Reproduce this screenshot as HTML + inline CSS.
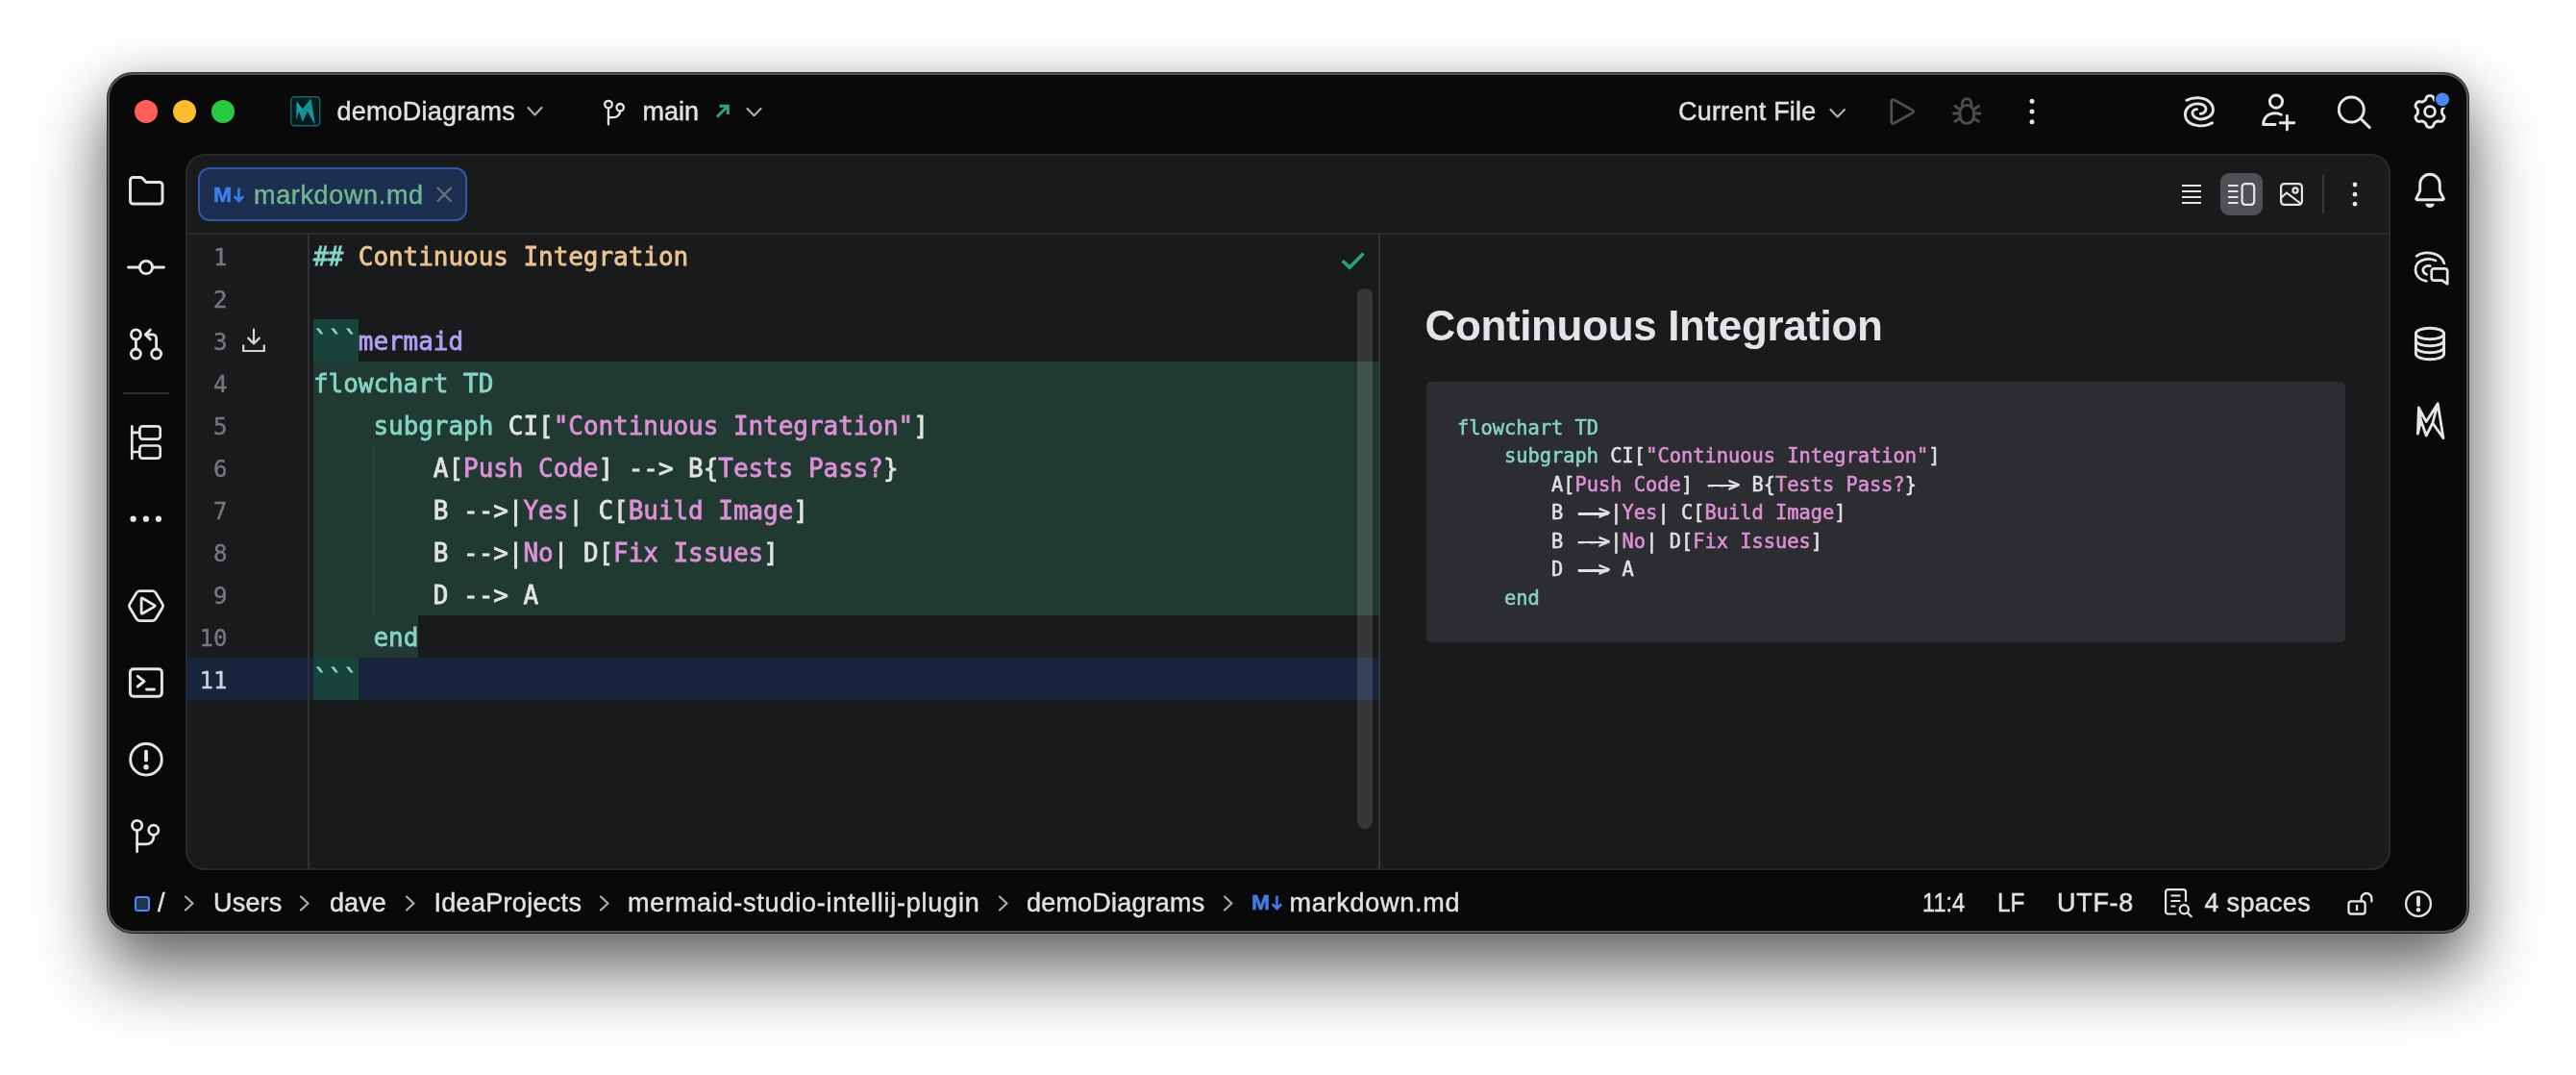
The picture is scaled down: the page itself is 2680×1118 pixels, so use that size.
<!DOCTYPE html>
<html lang="en">
<head>
<meta charset="utf-8">
<title>markdown.md – demoDiagrams</title>
<style>
*{box-sizing:border-box;margin:0;padding:0}
html,body{width:2680px;height:1118px;background:#fff;overflow:hidden}
body{position:relative;will-change:transform;-webkit-font-smoothing:antialiased;font-family:"Liberation Sans",sans-serif;color:#dfe1e5}
.abs{position:absolute}
svg{position:absolute;overflow:visible}
.ic{fill:none;stroke:#e4e5e8;stroke-width:2.9;stroke-linecap:round;stroke-linejoin:round}
.icf{fill:#e4e5e8;stroke:none}
#win{position:absolute;left:112px;top:76px;width:2456px;height:894px;background:#090909;border-radius:26px;
 box-shadow:0 0 0 1px rgba(0,0,0,.8),0 38px 72px 5px rgba(0,0,0,.54),0 6px 44px rgba(0,0,0,.16)}
#win:after{content:"";position:absolute;inset:0;border-radius:26px;border:2px solid rgba(255,255,255,.3);pointer-events:none}
.tl{position:absolute;top:104px;width:24px;height:24px;border-radius:50%}
.ui{position:absolute;font-size:27px;line-height:32px;white-space:pre;color:#dfe1e5}
.st{top:923px}
.chev{fill:none;stroke:#a9acb3;stroke-width:2.2;stroke-linecap:round;stroke-linejoin:round}
#panel{position:absolute;left:193px;top:160px;width:2294px;height:745px;background:#191a1c;border-radius:20px;overflow:hidden}
#panel:after{content:"";position:absolute;inset:0;border-radius:20px;border:2px solid #27282b;pointer-events:none}
.mono{font-family:"DejaVu Sans Mono","Liberation Mono",monospace}
.ln{position:absolute;left:0;width:43.5px;text-align:right;font-size:24px;line-height:44px;height:44px;padding-top:2px;color:#74777d}
.cl{position:absolute;left:133px;font-size:26px;line-height:44px;height:44px;padding-top:1px;white-space:pre;letter-spacing:-.05px;color:#dfe1e5}
.k{color:#84d4c4}.s{color:#dd8fd8}.h{color:#ebc48e}.p{color:#b3a0f5}.w{color:#e1e3e0}
.bg{position:absolute}
.ar{position:relative}
.ar:before{content:"";position:absolute;left:3.2px;right:2.4px;top:11.9px;height:2.5px;background:currentColor}
.mono{-webkit-text-stroke:.8px currentColor}
#pv pre{-webkit-text-stroke:.55px currentColor}
.ln{-webkit-text-stroke:.4px currentColor}
.ui{-webkit-text-stroke:.45px currentColor}
#pv{position:absolute;left:1291px;top:237px;width:956px;height:271px;background:#2b2d30;border-radius:5px}
#pv pre{position:absolute;left:32px;top:33.5px;font-size:20.4px;line-height:29.58px;letter-spacing:-.02px;color:#dfe1e5}
</style>
</head>
<body>
<div id="win"></div>

<!-- traffic lights -->
<div class="tl" style="left:140px;background:#ff5f57"></div>
<div class="tl" style="left:180px;background:#febc2e"></div>
<div class="tl" style="left:220px;background:#28c840"></div>

<!--TITLEBAR-->
<!-- project icon -->
<svg style="left:302px;top:100px" width="32" height="32" viewBox="0 0 32 32">
 <defs><linearGradient id="mg" x1="0" y1="0" x2="1" y2="1"><stop offset="0" stop-color="#19b4c0"/><stop offset=".5" stop-color="#0f8f8c"/><stop offset="1" stop-color="#16a6bd"/></linearGradient></defs>
 <rect x=".75" y=".75" width="30" height="30" rx="3.5" fill="#041b1e" stroke="#1c6468" stroke-width="1.4"/>
 <polygon points="6,25.5 6.8,5.4 12.8,13.3 21.6,2.4 25.8,29.5 17.9,16 12.8,26.8 9,16" fill="url(#mg)"/>
</svg>
<span class="ui" id="t_proj" style="left:350.5px;top:100px;letter-spacing:.2px">demoDiagrams</span>
<svg style="left:548px;top:110px" width="18" height="12"><path class="chev" d="M1.5 2 L8.5 9.5 L15.5 2"/></svg>
<!-- branch -->
<svg style="left:624px;top:100px" width="32" height="32" viewBox="0 0 32 32"><g class="ic" style="stroke-width:2.3">
 <circle cx="9" cy="8.6" r="3.8"/><circle cx="21.2" cy="11.7" r="3.7"/><path d="M9 12.6V29.4"/><path d="M9 22.2h5.2a7 7 0 0 0 7-6.8"/></g></svg>
<span class="ui" id="t_main" style="left:668.5px;top:100px;letter-spacing:0px">main</span>
<svg style="left:743.2px;top:107.2px" width="18" height="18"><path d="M3 14.5 L13.5 4 M5.5 3.2 H14.3 V12" fill="none" stroke="#2fa678" stroke-width="3" stroke-linecap="butt" stroke-linejoin="miter"/></svg>
<svg style="left:775.6px;top:110.6px" width="18" height="12"><path class="chev" d="M1.5 2 L8.5 9.2 L15.5 2"/></svg>

<span class="ui" id="t_cf" style="left:1746px;top:100px;letter-spacing:.2px">Current File</span>
<svg style="left:1903px;top:112px" width="18" height="12"><path class="chev" d="M1.5 2 L8.7 9.5 L16 2"/></svg>
<!-- run -->
<svg style="left:1959px;top:96px" width="40" height="40" viewBox="0 0 40 40"><path d="M8.8 9.8 Q8.8 6.6 11.8 8.1 L30.2 18.3 Q33 20 30.2 21.7 L11.8 31.9 Q8.8 33.4 8.8 30.2 Z" fill="none" stroke="#4c4d50" stroke-width="2.9" stroke-linejoin="round"/></svg>
<!-- debug -->
<svg style="left:2026px;top:96px" width="40" height="40" viewBox="0 0 40 40"><g fill="none" stroke="#4c4d50" stroke-width="2.9" stroke-linecap="round" stroke-linejoin="round">
 <path d="M13 20.6 a7.25 7.25 0 0 1 14.5 0 v4.5 a7.25 7.25 0 0 1 -14.5 0 Z"/>
 <path d="M15.6 14.6 V11.3 a4.6 4.6 0 0 1 9.2 0 V14.6"/>
 <path d="M13.2 18 L8 14.3 M27.3 18 L32.5 14.3 M13 22 H6.6 M27.5 22 H33.9 M13.4 27 L8 30.2 M27.1 27 L32.5 30.2"/></g></svg>
<!-- kebab -->
<svg style="left:2104px;top:96px" width="20" height="40"><g class="icf"><circle cx="10" cy="9.3" r="2.5"/><circle cx="10" cy="20.1" r="2.5"/><circle cx="10" cy="30.8" r="2.5"/></g></svg>
<!-- AI spiral -->
<svg style="left:2268px;top:96px" width="40" height="40" viewBox="0 0 40 40"><g class="ic">
 <path d="M6.9 8.2 C14 4.6 24.5 4.8 30.2 9.6 C36 14.6 35.8 22 30 25.6 C24 29.4 16 28.4 13.5 23.6 C12 20.2 14.2 17.4 17.6 17.6"/>
 <path d="M21.4 22.3 C24.6 22.5 27.6 19.6 26.8 16.2 C25.5 11.4 15 10 9 15.2 C3.6 20 4.6 28 10.2 32 C17 36.4 28 35.4 33.6 31.8"/></g></svg>
<!-- add user -->
<svg style="left:2348px;top:94px" width="44" height="44" viewBox="0 0 44 44"><g class="ic">
 <circle cx="20" cy="11.6" r="6.6"/><path d="M19 35.5 H6.6 C6.6 29 11 23.7 19 23.7 C21.4 23.7 23.6 24.2 25.3 25.2"/><path d="M31.4 26.5 V41 M24.2 33.7 H38.8"/></g></svg>
<!-- search -->
<svg style="left:2426px;top:94px" width="44" height="44" viewBox="0 0 44 44"><g class="ic"><circle cx="20.3" cy="20" r="13"/><path d="M29.8 29.3 L39.3 38.6"/></g></svg>
<!-- gear -->
<svg style="left:2508px;top:96px" width="40" height="40" viewBox="0 0 40 40"><g class="ic">
 <circle cx="20" cy="20" r="5.4"/>
 <path d="M32.5,20.0 L32.6,19.3 L32.6,18.7 L32.7,18.0 L33.2,17.2 L34.0,16.2 L34.8,15.2 L35.0,14.2 L34.9,13.4 L34.6,12.5 L34.2,11.8 L33.8,11.1 L33.2,10.4 L32.5,9.9 L31.5,9.6 L30.3,9.7 L29.0,10.0 L28.1,10.0 L27.4,9.8 L26.8,9.5 L26.3,9.1 L25.7,8.8 L25.1,8.4 L24.6,8.0 L24.2,7.2 L23.8,6.0 L23.2,4.8 L22.5,4.1 L21.7,3.7 L20.9,3.6 L20.0,3.6 L19.1,3.6 L18.3,3.7 L17.5,4.1 L16.8,4.8 L16.2,6.0 L15.8,7.2 L15.4,8.0 L14.9,8.4 L14.3,8.8 L13.7,9.1 L13.2,9.5 L12.6,9.8 L11.9,10.0 L11.0,10.0 L9.7,9.7 L8.5,9.6 L7.5,9.9 L6.8,10.4 L6.2,11.1 L5.8,11.8 L5.4,12.5 L5.1,13.4 L5.0,14.2 L5.2,15.2 L6.0,16.2 L6.8,17.2 L7.3,18.0 L7.4,18.7 L7.4,19.3 L7.4,20.0 L7.4,20.7 L7.4,21.3 L7.3,22.0 L6.8,22.8 L6.0,23.8 L5.2,24.8 L5.0,25.8 L5.1,26.6 L5.4,27.5 L5.8,28.2 L6.2,28.9 L6.8,29.6 L7.5,30.1 L8.5,30.4 L9.7,30.3 L11.0,30.0 L11.9,30.0 L12.6,30.2 L13.2,30.5 L13.7,30.9 L14.3,31.2 L14.9,31.6 L15.4,32.0 L15.8,32.8 L16.2,34.0 L16.8,35.2 L17.5,35.9 L18.3,36.3 L19.1,36.4 L20.0,36.5 L20.9,36.4 L21.7,36.3 L22.5,35.9 L23.2,35.2 L23.8,34.0 L24.2,32.8 L24.6,32.0 L25.1,31.6 L25.7,31.2 L26.3,30.9 L26.8,30.5 L27.4,30.2 L28.1,30.0 L29.0,30.0 L30.3,30.3 L31.5,30.4 L32.5,30.1 L33.2,29.6 L33.8,28.9 L34.2,28.2 L34.6,27.5 L34.9,26.6 L35.0,25.8 L34.8,24.8 L34.0,23.8 L33.2,22.8 L32.7,22.0 L32.6,21.3 L32.6,20.7Z"/></g>
 <circle cx="33" cy="7.4" r="8.6" fill="#090909"/><circle cx="33" cy="7.4" r="7" fill="#4d89f5"/></svg>
<!--/TITLEBAR-->
<!--LEFTBAR-->
<!-- folder -->
<svg style="left:132px;top:178px" width="40" height="40" viewBox="0 0 40 40"><path class="ic" d="M3.5 9.5 a3 3 0 0 1 3-3 h7.7 a3 3 0 0 1 2.2 1 l3.6 4 h14 a3 3 0 0 1 3 3 v16.5 a3 3 0 0 1 -3 3 h-27.5 a3 3 0 0 1 -3-3 Z"/></svg>
<!-- commit -->
<svg style="left:132px;top:258px" width="40" height="40" viewBox="0 0 40 40"><g class="ic"><circle cx="20" cy="20" r="6.6"/><path d="M1.5 20 H13 M27 20 H38.5"/></g></svg>
<!-- pull requests -->
<svg style="left:132px;top:338px" width="40" height="40" viewBox="0 0 40 40"><g class="ic" style="stroke-width:2.8">
 <circle cx="9.4" cy="9.9" r="5"/><circle cx="9.4" cy="30" r="5"/><circle cx="30.6" cy="30" r="5"/>
 <path d="M9.4 15 V25"/><path d="M30.6 25 V13.8 a3.9 3.9 0 0 0 -3.9 -3.9 H19.6"/><path d="M24.4 4.9 L19.4 9.9 L24.4 14.9"/></g></svg>
<div class="abs" style="left:128px;top:408px;width:48px;height:2px;background:#2b2c2f"></div>
<!-- structure -->
<svg style="left:132px;top:440px" width="40" height="40" viewBox="0 0 40 40"><g class="ic" style="stroke-width:2.7">
 <path d="M5.3 3.3 V37 M5.3 9.9 H13 M5.3 30 H13"/><rect x="13.4" y="3.4" width="21.3" height="13.2" rx="2.8"/><rect x="13.4" y="23.5" width="21.3" height="13.2" rx="2.8"/></g></svg>
<!-- more -->
<svg style="left:132px;top:520px" width="40" height="40" viewBox="0 0 40 40"><g class="icf"><circle cx="6.6" cy="19.7" r="3.1"/><circle cx="19.9" cy="19.7" r="3.1"/><circle cx="32.9" cy="19.7" r="3.1"/></g></svg>
<!-- services -->
<svg style="left:132px;top:610px" width="40" height="40" viewBox="0 0 40 40"><g class="ic" style="stroke-width:2.8">
 <path d="M9.91 6.62 Q11.10 4.65 13.40 4.65 L26.60 4.65 Q28.90 4.65 30.09 6.62 L37.01 18.13 Q38.20 20.10 37.01 22.07 L30.09 33.58 Q28.90 35.55 26.60 35.55 L13.40 35.55 Q11.10 35.55 9.91 33.58 L2.99 22.07 Q1.80 20.10 2.99 18.13 Z"/>
 <path d="M15.10 13.00 Q15.10 11.50 16.40 12.25 L28.60 19.35 Q29.90 20.10 28.60 20.85 L16.40 27.95 Q15.10 28.70 15.10 27.20 Z"/></g></svg>
<!-- terminal -->
<svg style="left:132px;top:690px" width="40" height="40" viewBox="0 0 40 40"><g class="ic">
 <rect x="3.4" y="5.8" width="33" height="28.4" rx="3.4"/><path d="M11.2 13.2 L18 18.6 L11.2 24"/><path d="M20.5 27 H28.5"/></g></svg>
<!-- problems -->
<svg style="left:132px;top:770px" width="40" height="40" viewBox="0 0 40 40"><g class="ic"><circle cx="20" cy="19.8" r="16.3"/><path d="M20 11.8 V20.6" style="stroke-width:3.9"/></g><circle class="icf" cx="20" cy="27.8" r="2.7"/></svg>
<!-- git -->
<svg style="left:132px;top:850px" width="40" height="40" viewBox="0 0 40 40"><g class="ic" style="stroke-width:2.7">
 <circle cx="10.6" cy="8.4" r="5.1"/><circle cx="27.8" cy="13.2" r="5.1"/><path d="M10.6 13.6 V35.8"/><path d="M10.6 27.8 H20.6 a7.2 7.2 0 0 0 7.2 -7.2 v-2"/></g></svg>
<!--/LEFTBAR-->
<!--RIGHTBAR-->
<!-- bell -->
<svg style="left:2508px;top:178px" width="40" height="40" viewBox="0 0 40 40"><g class="ic">
 <path d="M9.7 13.6 a10.3 10.3 0 0 1 20.6 0 V20.6 L34.2 28.4 a.9 .9 0 0 1 -.8 1.3 H6.6 a.9 .9 0 0 1 -.8 -1.3 L9.7 20.6 Z"/></g><path class="icf" d="M15.3 33.8 h9.4 a4.7 4.2 0 0 1 -9.4 0 Z"/></svg>
<!-- ai chat -->
<svg style="left:2508px;top:258px" width="44" height="44" viewBox="0 0 44 44"><g class="ic" style="stroke-width:2.7">
 <path d="M6.1 8.3 C14 2.6 31 3.6 34.8 15.8"/><path d="M26 12.9 C15 8.6 4.5 14 5 23 C5.5 30 11 33.5 16.3 34.3"/><path d="M20.3 18.6 C15.5 17.6 12 21 13 24 C13.6 26 15 27 16.5 27.4"/>
 <path d="M24.3 21.4 H35.6 a2.6 2.6 0 0 1 2.6 2.6 V37.3 L32.6 33.7 H24.3 a2.6 2.6 0 0 1 -2.6 -2.6 V24 a2.6 2.6 0 0 1 2.6 -2.6 Z"/></g></svg>
<!-- database -->
<svg style="left:2508px;top:338px" width="40" height="40" viewBox="0 0 40 40"><g class="ic">
 <ellipse cx="20" cy="9" rx="14.6" ry="5.8"/><path d="M5.4 9 V30 c0 3.2 6.5 5.8 14.6 5.8 s14.6 -2.6 14.6 -5.8 V9"/><path d="M5.4 16 c0 3.2 6.5 5.8 14.6 5.8 s14.6 -2.6 14.6 -5.8"/><path d="M5.4 23 c0 3.2 6.5 5.8 14.6 5.8 s14.6 -2.6 14.6 -5.8"/></g></svg>
<!-- mermaid logo -->
<svg style="left:2508px;top:416px" width="40" height="44" viewBox="0 0 40 44"><path class="ic" style="stroke-width:2.8" d="M7.4 35.2 L8.4 8 L16.2 22.6 L28.2 3.8 L34 39.6 L22.8 24 L16.2 37 L10.6 21 Z M22.8 24 L28.2 3.8 M10.6 21 L8.4 8"/></svg>
<!--/RIGHTBAR-->

<div id="panel">
<!--PANEL-->
<!-- tab -->
<div class="abs" style="left:13px;top:14px;width:280px;height:56px;border:2px solid #2d5aa6;background:#1c2f50;border-radius:12px"></div>
<span class="abs" id="t_mdicon" style="left:28.5px;top:31px;font-size:21.5px;line-height:24px;font-weight:700;color:#3b7fec;white-space:pre;-webkit-text-stroke:.5px #3b7fec;transform:scaleX(1.07);transform-origin:0 0">M</span>
<svg style="left:49px;top:34px" width="14" height="18"><path d="M6.5 1.5 V15 M1.8 10.2 L6.5 15.2 L11.2 10.2" fill="none" stroke="#3b7fec" stroke-width="2.6" stroke-linecap="butt" stroke-linejoin="miter"/></svg>
<span class="ui" id="t_tab" style="left:71px;top:27px;color:#70b690;letter-spacing:.65px">markdown.md</span>
<svg style="left:261px;top:34px" width="18" height="18"><path d="M1.5 1.5 L15 15 M15 1.5 L1.5 15" fill="none" stroke="#6b7080" stroke-width="2.2" stroke-linecap="round"/></svg>
<!-- tab bar right icons -->
<svg style="left:2075px;top:30px" width="24" height="24"><path d="M2 3h20M2 9h20M2 15h20M2 21h20" stroke="#e4e5e8" stroke-width="2.2" fill="none"/></svg>
<div class="abs" style="left:2117px;top:20px;width:44px;height:44px;border-radius:9px;background:#4f5053"></div>
<svg style="left:2124px;top:30px" width="30" height="24"><path d="M1 3h10.5M1 9h10.5M1 15h10.5M1 21h10.5" stroke="#e4e5e8" stroke-width="2.2" fill="none"/><rect x="15.6" y="1.2" width="12.6" height="21.6" rx="3.2" fill="none" stroke="#e4e5e8" stroke-width="2.2"/></svg>
<svg style="left:2178px;top:29px" width="26" height="26"><g fill="none" stroke="#e4e5e8" stroke-width="2.2" stroke-linejoin="round"><rect x="2.1" y="2.1" width="21.8" height="21.8" rx="3.4"/><circle cx="17" cy="9" r="2.6"/><path d="M2.3 16.5 L8 11.5 L23 23"/></g></svg>
<div class="abs" style="left:2223px;top:22px;width:2px;height:40px;background:#38393c"></div>
<svg style="left:2250px;top:26px" width="14" height="32"><g class="icf"><circle cx="7" cy="6" r="2.4"/><circle cx="7" cy="16.2" r="2.4"/><circle cx="7" cy="26.2" r="2.4"/></g></svg>
<!-- header separator -->
<div class="abs" style="left:0;top:82px;width:2294px;height:2px;background:#292a2d"></div>

<!-- editor backgrounds -->
<div class="bg" style="left:133px;top:172px;width:47px;height:44px;background:#17433b"></div>
<div class="bg" style="left:133px;top:216px;width:1108px;height:264px;background:#213a31"></div>
<div class="bg" style="left:133px;top:480px;width:109px;height:44px;background:#213a31"></div>
<div class="bg" style="left:0;top:524px;width:1241px;height:44px;background:#17243c"></div>
<div class="bg" style="left:133px;top:524px;width:47px;height:44px;background:#17433b"></div>
<div class="bg" style="left:195px;top:304px;width:1.5px;height:176px;background:rgba(255,255,255,.06)"></div>
<!-- gutter line -->
<div class="abs" style="left:127px;top:84px;width:2px;height:661px;background:#313236"></div>

<!-- line numbers -->
<div class="mono">
<div class="ln" style="top:84px">1</div>
<div class="ln" style="top:128px">2</div>
<div class="ln" style="top:172px">3</div>
<div class="ln" style="top:216px">4</div>
<div class="ln" style="top:260px">5</div>
<div class="ln" style="top:304px">6</div>
<div class="ln" style="top:348px">7</div>
<div class="ln" style="top:392px">8</div>
<div class="ln" style="top:436px">9</div>
<div class="ln" style="top:480px">10</div>
<div class="ln" style="top:524px;color:#d0d3d9">11</div>
</div>
<!-- gutter download icon -->
<svg style="left:58px;top:181px" width="26" height="26"><g fill="none" stroke="#d5d7db" stroke-width="2.2" stroke-linecap="butt" stroke-linejoin="miter"><path d="M13 1.5 V16 M7.2 10.6 L13 16.4 L18.8 10.6" stroke-linejoin="round" stroke-linecap="round"/><path d="M2.2 17.5 V24 H23.8 V17.5"/></g></svg>

<!-- code -->
<div class="mono" id="code">
<div class="cl" style="top:84px"><span class="k">## </span><span class="h">Continuous Integration</span></div>
<div class="cl" style="top:172px"><span class="k">```</span><span class="p">mermaid</span></div>
<div class="cl" style="top:216px"><span class="k">flowchart TD</span></div>
<div class="cl" style="top:260px">    <span class="k">subgraph</span> <span class="w">CI[</span><span class="s">"Continuous Integration"</span><span class="w">]</span></div>
<div class="cl" style="top:304px">        <span class="w">A[</span><span class="s">Push Code</span><span class="w">] --&gt; B{</span><span class="s">Tests Pass?</span><span class="w">}</span></div>
<div class="cl" style="top:348px">        <span class="w">B --&gt;|</span><span class="s">Yes</span><span class="w">| C[</span><span class="s">Build Image</span><span class="w">]</span></div>
<div class="cl" style="top:392px">        <span class="w">B --&gt;|</span><span class="s">No</span><span class="w">| D[</span><span class="s">Fix Issues</span><span class="w">]</span></div>
<div class="cl" style="top:436px">        <span class="w">D --&gt; A</span></div>
<div class="cl" style="top:480px">    <span class="k">end</span></div>
<div class="cl" style="top:524px"><span class="k">```</span></div>
</div>

<!-- inspection check -->
<svg style="left:1200px;top:98px" width="30" height="26"><path d="M3.8 13.2 L11.2 20.2 L25.5 5.5" fill="none" stroke="#27a37a" stroke-width="3.6" stroke-linecap="butt" stroke-linejoin="miter"/></svg>
<!-- scrollbar -->
<div class="abs" style="left:1219px;top:140px;width:16px;height:562px;border-radius:8px;background:rgba(255,255,255,.13)"></div>
<!-- split divider -->
<div class="abs" style="left:1241px;top:84px;width:2px;height:661px;background:#36373b"></div>

<!-- preview -->
<div class="abs" id="t_h" style="left:1289.5px;top:152.5px;font-size:44px;line-height:52px;font-weight:700;color:#e3e4e8;white-space:pre;letter-spacing:-.36px">Continuous Integration</div>
<div id="pv"><pre class="mono"><span class="k">flowchart TD</span>
    <span class="k">subgraph</span> CI[<span class="s">"Continuous Integration"</span>]
        A[<span class="s">Push Code</span>] <span class="ar">--&gt;</span> B{<span class="s">Tests Pass?</span>}
        B <span class="ar">--&gt;</span>|<span class="s">Yes</span>| C[<span class="s">Build Image</span>]
        B <span class="ar">--&gt;</span>|<span class="s">No</span>| D[<span class="s">Fix Issues</span>]
        D <span class="ar">--&gt;</span> A
    <span class="k">end</span></pre></div>
<!--/PANEL-->
</div>

<!--STATUS-->
<div class="abs" style="left:140px;top:932px;width:16px;height:16px;border:2px solid #4d89f5;border-radius:3.5px;background:#25324e"></div>
<span class="ui st" id="s0" style="left:164px">/</span>
<svg style="left:191px;top:931px" width="12" height="18"><path class="chev" d="M2 1.5 L9.5 8.5 L2 15.5"/></svg>
<span class="ui st" id="s1" style="left:222px;letter-spacing:.2px">Users</span>
<svg style="left:311px;top:931px" width="12" height="18"><path class="chev" d="M2 1.5 L9.5 8.5 L2 15.5"/></svg>
<span class="ui st" id="s2" style="left:343px;letter-spacing:.1px">dave</span>
<svg style="left:421px;top:931px" width="12" height="18"><path class="chev" d="M2 1.5 L9.5 8.5 L2 15.5"/></svg>
<span class="ui st" id="s3" style="left:451.5px;letter-spacing:.3px">IdeaProjects</span>
<svg style="left:623px;top:931px" width="12" height="18"><path class="chev" d="M2 1.5 L9.5 8.5 L2 15.5"/></svg>
<span class="ui st" id="s4" style="left:653px;letter-spacing:.76px">mermaid-studio-intellij-plugin</span>
<svg style="left:1038px;top:931px" width="12" height="18"><path class="chev" d="M2 1.5 L9.5 8.5 L2 15.5"/></svg>
<span class="ui st" id="s5" style="left:1068px;letter-spacing:.2px">demoDiagrams</span>
<svg style="left:1272px;top:931px" width="12" height="18"><path class="chev" d="M2 1.5 L9.5 8.5 L2 15.5"/></svg>
<span class="abs" id="s_mdicon" style="left:1301.5px;top:927px;font-size:21.5px;line-height:24px;font-weight:700;color:#3b7fec;white-space:pre;-webkit-text-stroke:.5px #3b7fec;transform:scaleX(1.07);transform-origin:0 0">M</span>
<svg style="left:1322px;top:930px" width="14" height="18"><path d="M6.5 1.5 V15 M1.8 10.2 L6.5 15.2 L11.2 10.2" fill="none" stroke="#3b7fec" stroke-width="2.6" stroke-linecap="butt" stroke-linejoin="miter"/></svg>
<span class="ui st" id="s6" style="left:1341.5px;letter-spacing:.75px">markdown.md</span>

<span class="ui st" id="s7" style="left:1999.5px;transform:scaleX(.875);transform-origin:0 0">11:4</span>
<span class="ui st" id="s8" style="left:2078px;transform:scaleX(.9);transform-origin:0 0">LF</span>
<span class="ui st" id="s9" style="left:2140px;letter-spacing:.7px">UTF-8</span>
<svg style="left:2250px;top:922px" width="34" height="34" viewBox="0 0 34 34"><g fill="none" stroke="#e4e5e8" stroke-width="2.2" stroke-linecap="round" stroke-linejoin="round">
 <path d="M13.5 28.5 H5.6 a2.5 2.5 0 0 1 -2.5 -2.5 V5.6 a2.5 2.5 0 0 1 2.5 -2.5 H21.5 a2.5 2.5 0 0 1 2.5 2.5 V15"/>
 <path d="M8.5 9.5 H18.5 M8.5 15 H18.5 M8.5 20.5 H13.5" stroke-linecap="butt"/>
 <circle cx="22.3" cy="23.7" r="4.6"/><path d="M25.8 27.2 L29.8 31.2"/></g></svg>
<span class="ui st" id="s10" style="left:2293.5px;letter-spacing:.3px">4 spaces</span>
<svg style="left:2440px;top:926px" width="30" height="28" viewBox="0 0 30 28"><g fill="none" stroke="#e4e5e8" stroke-width="2.3" stroke-linecap="round" stroke-linejoin="round">
 <rect x="3.5" y="11.3" width="17.1" height="13.2" rx="2.8"/><path d="M12.1 15.8 V20.2"/><path d="M16.6 11.3 V8.4 a5.4 5.4 0 0 1 10.8 0 V11.6"/></g></svg>
<svg style="left:2500px;top:924px" width="32" height="32" viewBox="0 0 32 32"><circle cx="16" cy="16" r="12.9" fill="none" stroke="#e4e5e8" stroke-width="2.3"/><path d="M16 9.3 V17" stroke="#e4e5e8" stroke-width="3.8" stroke-linecap="round"/><circle cx="16" cy="22.2" r="2.3" fill="#e4e5e8"/></svg>
<!--/STATUS-->
</body>
</html>
